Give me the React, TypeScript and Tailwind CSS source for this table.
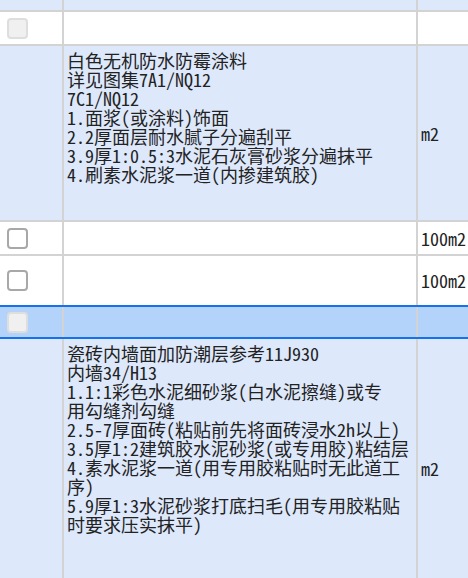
import React from 'react';

const LINES_A = [
  '白色无机防水防霉涂料',
  '详见图集7A1/NQ12',
  '7C1/NQ12',
  '1.面浆(或涂料)饰面',
  '2.2厚面层耐水腻子分遍刮平',
  '3.9厚1:0.5:3水泥石灰膏砂浆分遍抹平',
  '4.刷素水泥浆一道(内掺建筑胶)',
];

const LINES_B = [
  '瓷砖内墙面加防潮层参考11J930',
  '内墙34/H13',
  '1.1:1彩色水泥细砂浆(白水泥擦缝)或专',
  '用勾缝剂勾缝',
  '2.5-7厚面砖(粘贴前先将面砖浸水2h以上)',
  '3.5厚1:2建筑胶水泥砂浆(或专用胶)粘结层',
  '4.素水泥浆一道(用专用胶粘贴时无此道工',
  '序)',
  '5.9厚1:3水泥砂浆打底扫毛(用专用胶粘贴',
  '时要求压实抹平)',
];

const Check = ({ disabled }: { disabled?: boolean }) => (
  <span
    className={`block w-[21px] h-[21px] rounded-[4px] border-2 ${
      disabled ? 'bg-[#f0f0f0] border-[#dedede]' : 'bg-white border-[#a8a8a8]'
    }`}
  />
);

interface RowProps {
  h: string;
  bg: string;
  check?: 'on' | 'off';
  unit?: string;
  lines?: string[];
  border?: string;
}

const Row = ({ h, bg, check, unit, lines, border = 'border-b-2 border-[#d3d3d3]' }: RowProps) => (
  <div className={`flex ${h} ${bg} ${border}`}>
    <div className="w-[64px] shrink-0 border-r-2 border-[#d3d3d3] flex items-center pl-[7px]">
      {check && <Check disabled={check === 'off'} />}
    </div>
    <div className="w-[354px] shrink-0 border-r-2 border-[#d3d3d3] pl-[3px] pt-[5px] overflow-hidden">
      {lines?.map((l) => (
        <div key={l} className="whitespace-nowrap leading-[19px]">
          {l}
        </div>
      ))}
    </div>
    <div className="flex-1 flex items-center pl-[3px] whitespace-nowrap">{unit}</div>
  </div>
);

export default function App() {
  return (
    <div className="w-[468px] h-[578px] overflow-hidden bg-white text-[#222] text-[18px] font-['Noto_Sans_Mono_CJK_SC','Noto_Sans_CJK_SC',sans-serif]">
      <Row h="h-[12px]" bg="bg-[#dde8fb]" />
      <Row h="h-[34px]" bg="bg-white" check="off" />
      <Row h="h-[176px]" bg="bg-[#dde8fb]" lines={LINES_A} unit="m2" />
      <Row h="h-[34px]" bg="bg-white" check="on" unit="100m2" />
      <Row h="h-[49px]" bg="bg-white" check="on" unit="100m2" border="" />
      <Row h="h-[34px]" bg="bg-[#b3d3fb]" check="off" border="border-y-2 border-[#1671ec]" />
      <Row h="h-[260px]" bg="bg-[#dde8fb]" lines={LINES_B} unit="m2" />
    </div>
  );
}
